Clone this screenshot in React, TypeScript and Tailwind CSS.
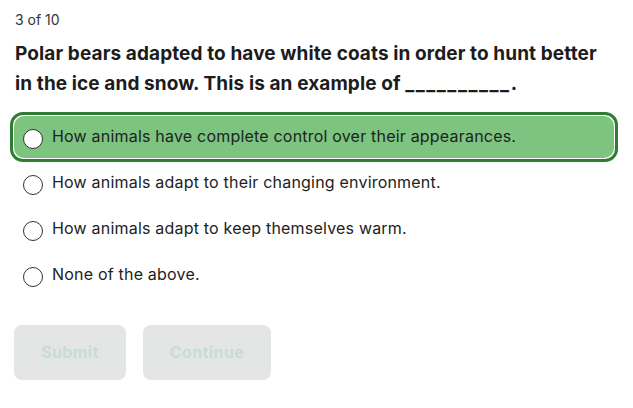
import { useState } from "react";

const options = [
  "How animals have complete control over their appearances.",
  "How animals adapt to their changing environment.",
  "How animals adapt to keep themselves warm.",
  "None of the above.",
];

function OptionRow({
  label,
  selected,
  onSelect,
}: {
  label: string;
  selected: boolean;
  onSelect: () => void;
}) {
  if (selected) {
    return (
      <div className="-my-[2px] h-[50px] rounded-[13px] border-[3px] border-[#2e7d32] bg-white p-[1px]">
        <button
          type="button"
          onClick={onSelect}
          className="flex h-full w-full items-center gap-[9px] rounded-[10px] bg-[#7cc47f] pl-[9px] text-left"
        >
          <span className="mt-[4px] h-[20px] w-[20px] shrink-0 rounded-full border border-[#333] bg-white" />
          <span className="-mt-[1px] text-[16px] tracking-[0.2px] text-[#222]">{label}</span>
        </button>
      </div>
    );
  }
  return (
    <button
      type="button"
      onClick={onSelect}
      className="flex h-[46px] w-full items-center gap-[9px] pl-[13px] text-left"
    >
      <span className="mt-[4px] h-[20px] w-[20px] shrink-0 rounded-full border border-[#333] bg-white" />
      <span className="-mt-[1px] text-[16px] tracking-[0.2px] text-[#222]">{label}</span>
    </button>
  );
}

export default function App() {
  const [selected, setSelected] = useState(0);

  return (
    <div className="min-h-screen bg-white px-[15px] pt-[10px] font-['Inter',sans-serif]">
      <div className="text-[14px] leading-[20px] text-[#333]">3 of 10</div>
      <p className="mt-[9px] text-[19px] font-bold leading-[30px] tracking-[0.1px] text-[#1c1c1c]">
        Polar bears adapted to have white coats in order to hunt better in the ice and snow. This
        is an example of <span className="tracking-[1.5px]">__________</span>.
      </p>
      <div className="-ml-[5px] mt-[14.5px] flex flex-col">
        {options.map((o, i) => (
          <OptionRow key={o} label={o} selected={selected === i} onSelect={() => setSelected(i)} />
        ))}
      </div>
      <div className="-ml-[1px] mt-[27px] flex gap-[17px]">
        <button
          type="button"
          disabled
          className="h-[55px] w-[112px] rounded-[8px] bg-[#e4e6e5] text-[16px] font-bold tracking-[0.4px] text-[#c6dcd8]"
        >
          Submit
        </button>
        <button
          type="button"
          disabled
          className="h-[55px] w-[128px] rounded-[8px] bg-[#e4e6e5] text-[16px] font-bold tracking-[0.4px] text-[#c6dcd8]"
        >
          Continue
        </button>
      </div>
    </div>
  );
}
